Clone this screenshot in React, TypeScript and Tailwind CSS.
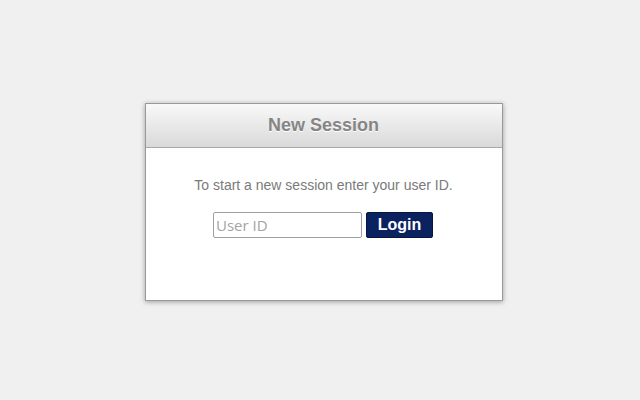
export default function App() {
  return (
    <div
      className="min-h-screen w-full bg-[#f0f0f0] flex justify-center pt-[103px] pl-[7px]"
      style={{ fontFamily: '"Liberation Sans", Arial, sans-serif' }}
    >
      <div className="w-[358px] h-[198px] bg-white border border-[#9a9a9a] shadow-[0_1px_5px_rgba(0,0,0,0.35)] flex flex-col">
        <div className="h-[44px] bg-gradient-to-b from-[#f9f9f9] to-[#d9d9d9] border-b border-[#a8a8a8] flex items-center justify-center">
          <h1 className="text-[18px] font-bold text-[#858585] [text-shadow:0_1px_0_#fff]">New Session</h1>
        </div>
        <div className="flex flex-col items-center pt-[27px]">
          <p className="text-[14px] text-[#7a7a7a]">To start a new session enter your user ID.</p>
          <div className="flex gap-[4px] mt-[16px] -ml-[1px]">
            <input
              type="text"
              placeholder="User ID"
              className="w-[149px] h-[26px] border border-[#a0a0a0] rounded-[2px] px-[2px] text-[15px] text-[#333] placeholder:text-[#a3a3a3] outline-none"
              style={{ fontFamily: '"Open Sans", "DejaVu Sans", sans-serif' }}
            />
            <button className="w-[67px] h-[26px] bg-[#0b2260] border border-[#061640] rounded-[2px] text-white font-bold text-[16px]">
              Login
            </button>
          </div>
        </div>
      </div>
    </div>
  );
}
